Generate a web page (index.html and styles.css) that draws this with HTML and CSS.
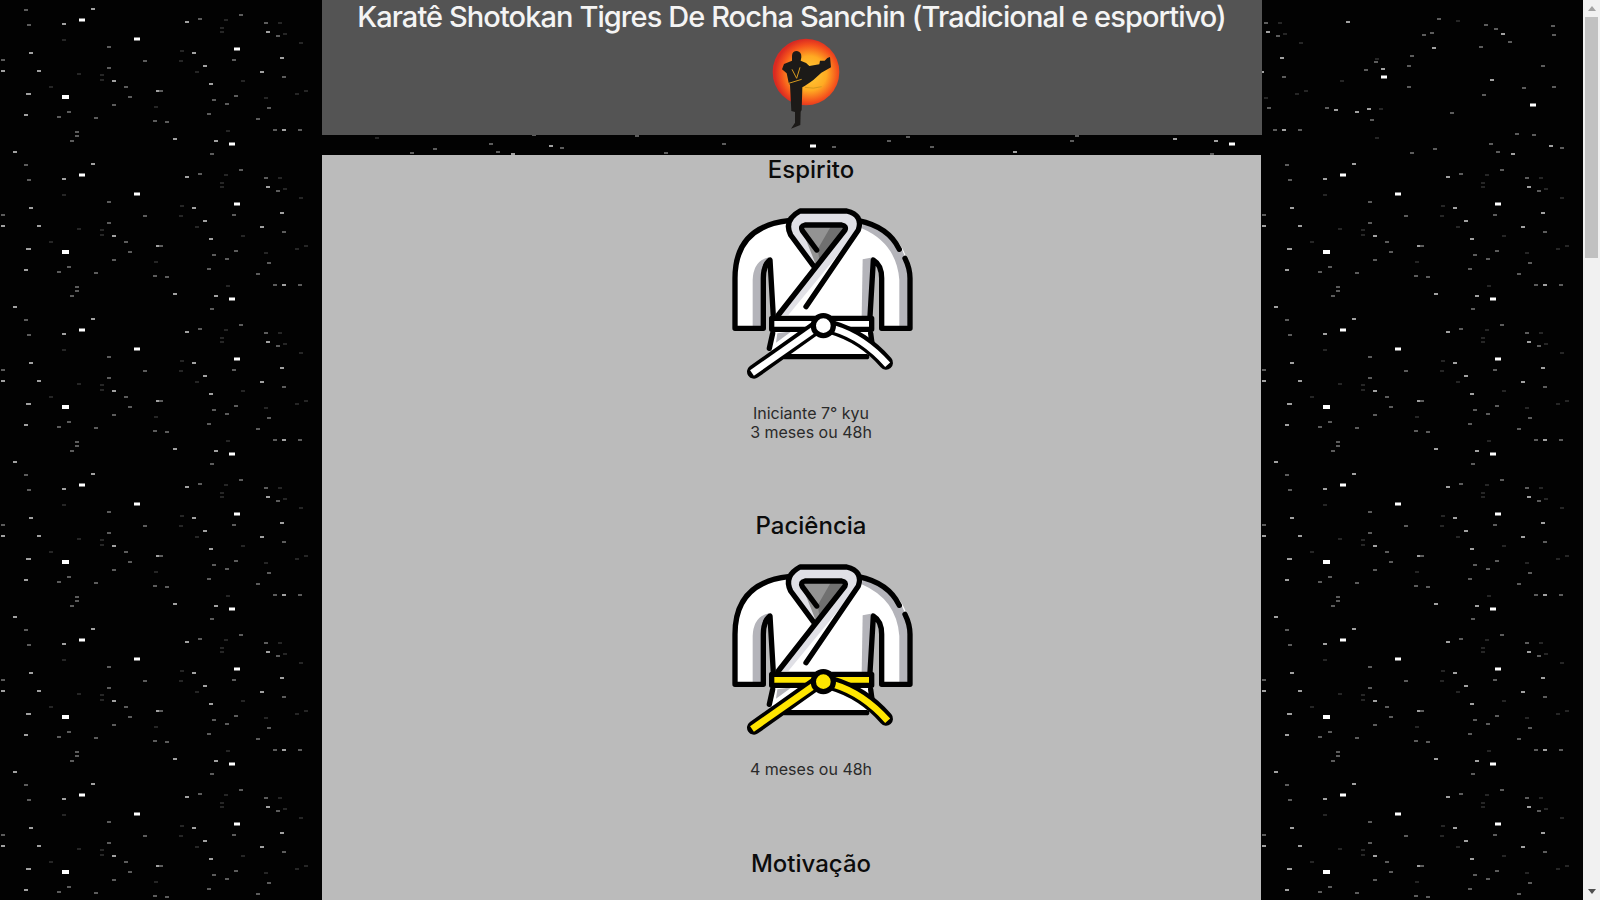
FILE: index.html
```html
<!DOCTYPE html>
<html lang="pt-BR">
<head>
  <meta charset="UTF-8" />
  <title>Karatê Shotokan Tigres De Rocha Sanchin</title>
  <link rel="stylesheet" href="styles.css">
</head>
<body>
  <div class="page">
    <!-- fundo de estrelas -->
    <svg class="sky" width="1583" height="900" aria-hidden="true">
      <defs>
        <g id="stars" fill="none">
          <path class="star-big" d="M62 97h7"/>
          <path class="star-bright" d="M79 20h6M134 39h6M234 49h6M229 144h6M381 77h6M530 105h6M810 146h6"/>
          <path class="star-mid" d="M91 9h4M62 24h4M29 53h4M1 71h4M37 71h4M112 81h4M156 91h4M26 94h5M24 115h4M13 152h4M185 22h4M266 32h4M192 53h4M280 58h4M203 66h4M260 72h4M209 84h4M282 130h4M173 139h4M214 141h4M346 22h4M432 48h4M381 69h4M490 80h4M334 110h4M355 112h4M367 109h4M549 146h4M511 154h4M501 34h4"/>
          <path class="star-dim" d="M24 10h4M27 25h4M107 47h4M1 60h4M143 61h4M107 68h4M124 87h4M128 97h4M112 105h4M67 112h4M57 117h4M94 118h4M153 121h4M75 132h4M75 136h4M70 141h4M239 15h4M198 19h4M264 23h4M276 36h4M232 60h4M282 77h4M159 91h4M234 96h4M212 100h4M225 104h4M267 108h4M207 114h4M256 119h4M165 122h4M273 130h4M298 130h4M210 154h4M437 19h4M484 25h4M422 35h4M430 33h4M494 29h4M508 42h4M551 26h4M552 35h4M479 47h4M410 56h4M374 62h4M407 66h4M364 70h4M541 66h4M407 87h4M522 88h4M552 87h4M482 95h4M325 108h4M450 113h4M370 120h4M515 134h4M532 135h4M489 144h4M433 149h4M410 153h4M496 152h4M722 144h4M887 141h4M906 137h4M635 136h4M832 147h4M930 147h4M664 153h4M560 148h4"/>
          <path class="star-faint" d="M62 40h4M100 75h4M49 87h4M77 74h4M100 80h4M154 107h4M278 23h4M224 20h4M283 34h4M220 28h4M220 32h4M299 43h4M180 51h4M179 61h4M195 72h4M241 81h4M304 91h4M295 94h4M264 98h4M226 131h4M456 21h4M340 81h4M375 59h4M379 109h4M375 138h4"/>
        </g>
        <pattern id="sky-top" width="1000" height="155" patternUnits="userSpaceOnUse"><use href="#stars"/></pattern>
        <pattern id="sky-rest" width="1261" height="155" patternUnits="userSpaceOnUse"><use href="#stars"/></pattern>

        <symbol id="gi" viewBox="0 0 600 570">
          <g stroke="#000" stroke-width="16" stroke-linejoin="round" stroke-linecap="round">
            <!-- mangas e corpo -->
            <path fill="#fff" stroke="none" d="M205 62Q45 80 45 235V385H130V235L150 180L160 350L148 445L190 470H440L458 445L450 350L460 180L485 235V385H570V235Q565 90 415 62Z"/>
            <path fill="#b4b4ba" stroke="none" d="M98 382V240Q100 180 148 172L150 205Q130 210 130 235V382Z"/>
            <path fill="#b4b4ba" stroke="none" d="M430 62Q560 95 566 235V382H538V240Q530 130 425 85Z"/>
            <path fill="#b4b4ba" stroke="none" d="M428 178L460 172L450 350H425Z"/>
            <path fill="none" d="M205 62Q45 80 45 235V385H130V235Q130 195 150 180L160 350"/>
            <path fill="none" d="M415 62Q505 80 538 148M555 175Q570 205 570 235V385H485V235Q485 195 460 180L450 350"/>
            <path fill="none" d="M158 400L148 445M452 400L458 445M195 470H440"/>
            <!-- gola -->
            <path fill="#e0e0e6" stroke="none" d="M240 33H380Q430 45 415 90L205 345H175L280 197L212 105Q190 60 240 33Z"/>
            <path fill="#939393" stroke="none" d="M255 75H365Q380 78 375 90L290 200L247 92Q240 78 255 75Z"/>
            <path fill="#707070" stroke="none" d="M335 75H365Q380 78 375 90L300 190L293 148Z"/>
            <path fill="none" d="M280 197L212 105Q190 60 240 33H380Q430 45 415 90L258 320"/>
            <path fill="none" d="M175 345L375 90Q380 78 365 75H255Q240 78 247 92L290 150"/>
            <path fill="#b4b4ba" stroke="none" d="M215 394L168 428L172 400Z"/>
            <!-- faixa -->
            <rect x="155" y="355" width="300" height="33" fill="var(--belt)"/>
            <path fill="none" stroke-width="42" d="M285 385L102 515"/>
            <path fill="none" stroke-width="42" d="M335 382Q430 410 498 488"/>
            <path fill="none" stroke="var(--belt)" stroke-width="20" stroke-linecap="butt" d="M280 390L96 519"/>
            <path fill="none" stroke="var(--belt)" stroke-width="20" stroke-linecap="butt" d="M340 385Q430 412 503 494"/>
            <circle cx="310" cy="377" r="30" fill="var(--belt)"/>
          </g>
        </symbol>

        <radialGradient id="fire" cx="0.55" cy="0.52" r="0.52">
          <stop offset="0" stop-color="#ffd03a"/>
          <stop offset="0.5" stop-color="#ffaa22"/>
          <stop offset="0.82" stop-color="#f4501c"/>
          <stop offset="1" stop-color="#d92a22"/>
        </radialGradient>
      </defs>
      <rect width="1583" height="900" fill="#020202"/>
      <rect width="1583" height="155" fill="url(#sky-top)"/>
      <rect y="155" width="1583" height="745" fill="url(#sky-rest)"/>
    </svg>

    <div class="wrap">
      <header class="top">
        <h1>Karatê Shotokan Tigres De Rocha Sanchin (Tradicional e esportivo)</h1>
        <svg class="logo" viewBox="0 0 300 315" width="100" height="105" role="img" aria-label="Logo">
          <circle cx="168" cy="126" r="100" fill="url(#fire)"/>
          <path fill="#1c1a18" d="M126 78Q126 63 141 63Q155 65 154 82L152 92Q168 96 178 108L208 103L210 92L224 92L232 84L240 81L243 112L214 128L190 150Q170 165 157 172L155 240L152 245L151 285L123 296L135 278L135 246L124 243L120 165L116 158L110 130L96 118L102 102L126 92Z"/>
          <path fill="none" stroke="#d69a1e" stroke-width="3" d="M126 118L140 145L150 112M116 160L155 148M165 172Q190 178 215 170"/>
        </svg>
      </header>

      <main class="ranks">
        <ul class="rank-list">
          <li class="rank rank-white">
            <h2>Espirito</h2>
            <svg class="gi" width="200" height="190" aria-hidden="true"><use href="#gi"/></svg>
            <p>Iniciante 7° kyu<br>3 meses ou 48h</p>
          </li>
          <li class="rank rank-yellow">
            <h2>Paciência</h2>
            <svg class="gi" width="200" height="190" aria-hidden="true"><use href="#gi"/></svg>
            <p>4 meses ou 48h</p>
          </li>
          <li class="rank">
            <h2>Motivação</h2>
          </li>
        </ul>
      </main>
    </div>
  </div>

  <div class="scrollbar" aria-hidden="true">
    <span class="arrow arrow-up"></span>
    <span class="thumb"></span>
    <span class="arrow arrow-down"></span>
  </div>
</body>
</html>
```

FILE: styles.css
```css
* {
  box-sizing: border-box;
}

html, body {
  height: 100%;
}

body {
  margin: 0;
  display: flex;
  height: 900px;
  overflow: hidden;
  background: #000;
  font-family: Inter, "Open Sans", sans-serif;
}

.page {
  position: relative;
  flex: 1;
  height: 900px;
  overflow: hidden;
}

.sky {
  position: absolute;
  top: 0;
  left: 0;
  filter: blur(0.5px);
}

.star-big { stroke: #fff; stroke-width: 4; }
.star-bright { stroke: #fff; stroke-width: 3; }
.star-mid { stroke: #a0a0a0; stroke-width: 2; }
.star-dim { stroke: #5c5c5c; stroke-width: 2; }
.star-faint { stroke: #262626; stroke-width: 2; }

.wrap {
  position: relative;
  width: 940px;
  margin: 0 auto;
}

/* Cabeçalho */
.top {
  height: 135px;
  background: #545454;
  text-align: center;
}

.top h1 {
  margin: 0;
  padding-top: 1px;
  color: #f4f4f4;
  font-size: 29px;
  line-height: 32px;
  font-weight: 500;
  letter-spacing: -0.92px;
}

.logo {
  display: inline-block;
  margin: -3px 0 0 17px;
  vertical-align: top;
}

/* Faixas */
.ranks {
  margin: 20px 1px 0 0;
  background: #bbb;
  min-height: 745px;
}

.rank-list {
  margin: 0;
  padding: 0 0 0 40px;
  list-style: none;
}

.rank {
  padding-bottom: 69px;
  text-align: center;
}

.rank-yellow {
  padding-bottom: 70px;
}

.rank h2 {
  margin: 0;
  color: #0c0c0c;
  font-size: 24px;
  line-height: 30px;
  font-weight: 500;
}

.rank p {
  margin: 14px 0 0;
  color: #2a2a2a;
  font-size: 16px;
  line-height: 19px;
}

.gi {
  display: inline-block;
  margin: 15px 0 0 18px;
  vertical-align: top;
}

.rank-white { --belt: #fff; }
.rank-yellow { --belt: #ffe600; }

/* Barra de rolagem */
.scrollbar {
  width: 17px;
  height: 900px;
  display: flex;
  flex-direction: column;
  align-items: center;
  background: #f1f1f1;
}

.thumb {
  width: 13px;
  height: 241px;
  background: #c1c1c1;
}

.arrow {
  width: 0;
  height: 0;
  border-left: 4px solid transparent;
  border-right: 4px solid transparent;
}

.arrow-up {
  margin: 6px 0 6px;
  border-bottom: 5px solid #a3a3a3;
}

.arrow-down {
  margin-top: auto;
  margin-bottom: 6px;
  border-top: 5px solid #505050;
}
```
